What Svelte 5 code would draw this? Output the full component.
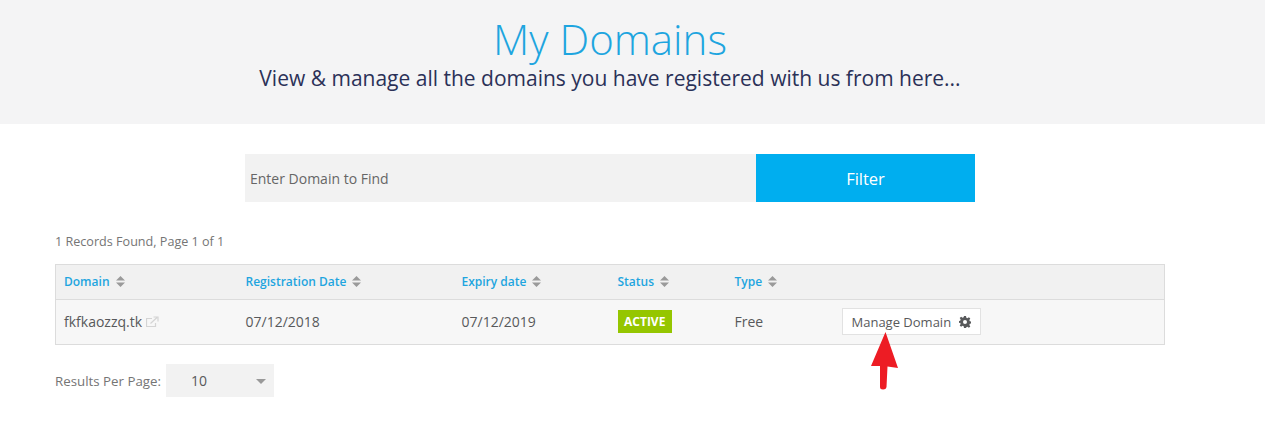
<script>
  const columns = [
    { label: "Domain", width: 182 },
    { label: "Registration Date", width: 216 },
    { label: "Expiry date", width: 156 },
    { label: "Status", width: 117 },
    { label: "Type", width: 107 }
  ];
</script>

<div class="page">
  <header class="hero">
    <h1>My Domains</h1>
    <p>View &amp; manage all the domains you have registered with us from here...</p>
  </header>

  <form class="filter" on:submit|preventDefault>
    <input type="text" placeholder="Enter Domain to Find" />
    <button type="submit">Filter</button>
  </form>

  <div class="content">
    <div class="records">1 Records Found, Page 1 of 1</div>

    <table>
      <colgroup>
        {#each columns as col}
          <col style="width: {col.width}px" />
        {/each}
        <col />
      </colgroup>
      <thead>
        <tr>
          {#each columns as col}
            <th>
              <span class="sortable">
                {col.label}
                <svg class="sort" width="9" height="11" viewBox="0 0 9 11">
                  <path d="M4.500 0 9 4.500H0z M0 6.500h9L4.500 11z" />
                </svg>
              </span>
            </th>
          {/each}
          <th></th>
        </tr>
      </thead>
      <tbody>
        <tr>
          <td>
            fkfkaozzq.tk
            <svg class="ext" width="13" height="12" viewBox="0 0 13 12" fill="none">
              <path d="M9.500 7v3.500h-9v-8H6" />
              <path d="M4.500 7.500 11 1.500M7.500 1H12v4.500" />
            </svg>
          </td>
          <td>07/12/2018</td>
          <td>07/12/2019</td>
          <td><span class="badge">ACTIVE</span></td>
          <td>Free</td>
          <td>
            <a class="manage" href="#manage">
              Manage Domain
              <svg width="12" height="12" viewBox="0 0 24 24">
                <path fill-rule="evenodd" d="M10 0h4l.7 3.400 2.200.9 2.900-1.900 2.800 2.800-1.900 2.900.9 2.200 3.400.7v4l-3.400.7-.9 2.200 1.900 2.900-2.800 2.800-2.900-1.900-2.200.9L14 24h-4l-.7-3.400-2.200-.9-2.900 1.900-2.800-2.800 1.900-2.900-.9-2.200L-1 14v-4l3.400-.7.9-2.200-1.900-2.900 2.800-2.800 2.900 1.900 2.200-.9zM12 8a4 4 0 1 0 0 8 4 4 0 0 0 0-8z" />
              </svg>
            </a>
          </td>
        </tr>
      </tbody>
    </table>

    <div class="per-page">
      <span>Results Per Page:</span>
      <div class="select">
        10
        <i class="caret"></i>
      </div>
    </div>
  </div>

  <!-- red annotation arrow on top of the screenshot -->
  <svg class="arrow" width="30" height="60" viewBox="0 0 30 60">
    <path d="M16.500 0 29 36 18.500 34.500 17.500 55Q17 57.500 14 57.500 11 57.500 11 55L11 34 2 34z" fill="#ed1c24" />
  </svg>
</div>

<style>
  :global(body) {
    margin: 0;
    background: #fff;
  }

  .page {
    position: relative;
    height: 422px;
    overflow: hidden;
    font-family: "Open Sans", sans-serif;
    color: #58595b;
  }

  .hero {
    height: 124px;
    box-sizing: border-box;
    padding: 9px 45px 0 0;
    background: #f4f4f5;
    text-align: center;
  }

  h1 {
    margin: 0;
    font-size: 42px;
    line-height: 60px;
    font-weight: 300;
    color: #1ea5df;
  }

  .hero p {
    margin: -6px 0 0;
    font-size: 21px;
    line-height: 30px;
    color: #2b3158;
  }

  .filter {
    display: flex;
    width: 730px;
    height: 48px;
    margin: 30px 0 0 245px;
  }

  .filter input {
    flex: 1;
    min-width: 0;
    border: 0;
    outline: 0;
    padding: 0 5px;
    background: #f2f2f2;
    font: 14px "Open Sans", sans-serif;
    color: #58595b;
  }

  .filter input::placeholder {
    color: #666;
    opacity: 1;
  }

  .filter button {
    width: 219px;
    border: 0;
    background: #00aeef;
    color: #fff;
    font: 500 16.5px "Open Sans", sans-serif;
  }

  .content {
    padding: 31px 100px 0 55px;
  }

  .records {
    font-size: 12.6px;
    line-height: 17px;
    color: #757575;
  }

  table {
    width: 1110px;
    margin-top: 14px;
    table-layout: fixed;
    border-collapse: collapse;
    background: #f7f7f7;
    border: 1px solid #dcdcdc;
  }

  th {
    height: 35px;
    padding: 0 0 1px 8px;
    box-sizing: border-box;
    background: #f1f1f1;
    border-bottom: 1px solid #dcdcdc;
    text-align: left;
    font-size: 12px;
    font-weight: 600;
    color: #1ea5df;
  }

  .sortable {
    display: inline-flex;
    align-items: center;
    gap: 6px;
  }

  .sort {
    fill: #9a9a9a;
  }

  td {
    height: 45px;
    padding: 0 0 1px 8px;
    box-sizing: border-box;
    font-size: 14px;
    color: #58595b;
  }

  .ext {
    vertical-align: -1px;
    stroke: #d4d4d4;
    stroke-width: 1.2;
  }

  .badge {
    display: inline-block;
    padding: 0 6.5px;
    line-height: 23px;
    background: #95c600;
    color: #fff;
    font-size: 12px;
    font-weight: 700;
  }

  .manage {
    display: inline-flex;
    align-items: center;
    gap: 8px;
    height: 27px;
    box-sizing: border-box;
    padding: 0 9px;
    background: #fff;
    border: 1px solid #e2e2e2;
    font-size: 13px;
    color: #58595b;
    text-decoration: none;
  }

  .manage svg {
    fill: #58595b;
  }

  .per-page {
    display: flex;
    align-items: center;
    gap: 5px;
    margin-top: 19px;
    font-size: 13.3px;
    color: #757575;
  }

  .select {
    position: relative;
    width: 108px;
    height: 33px;
    box-sizing: border-box;
    padding-left: 25px;
    background: #f2f2f2;
    font-size: 14px;
    line-height: 33px;
    color: #58595b;
  }

  .caret {
    position: absolute;
    right: 8px;
    top: 15px;
    border-style: solid;
    border-width: 5px 5px 0;
    border-color: #999 transparent transparent;
  }

  .arrow {
    position: absolute;
    left: 869px;
    top: 332px;
  }
</style>
